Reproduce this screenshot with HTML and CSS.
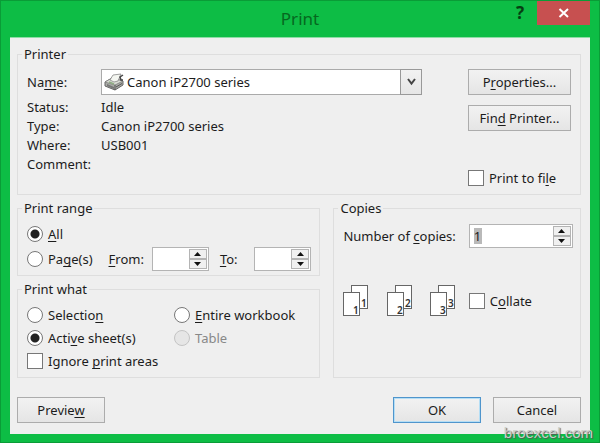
FILE: index.html
```html
<!doctype html>
<html lang="en">
    <head>
        <meta charset="utf-8">
        <title>Print</title>
        <link rel="stylesheet" href="styles.css">
    </head>
    <body>
    <div class="window">
        <header class="titlebar">
            <h1>Print</h1>
            <div class="window-buttons">
                <button type="button" class="help-button" aria-label="Help">?</button>
                <button type="button" class="close-button" aria-label="Close">
                    <svg width="12" height="10" viewBox="0 0 12 10"><path d="M1.5 1 L10 9 M10 1 L1.5 9" stroke="#fff" stroke-width="2" fill="none"/></svg>
                </button>
            </div>
        </header>

        <form class="dialog">
            <fieldset class="group">
                <legend>Printer</legend>
                <div class="printer">
                    <div class="printer-info">
                        <label class="name-label" for="printer-name">Na<u>m</u>e:</label>
                        <div class="combo">
                            <select id="printer-name">
                                <option>Canon iP2700 series</option>
                            </select>
                            <svg class="combo-icon" width="21" height="18" viewBox="0 0 21 18">
                                <path d="M1 9 L8 5 L19 8 L19 12 L11 17 L1 13 Z" fill="#a9aba6" stroke="#666" stroke-width="1"/>
                                <path d="M1 9 L8 5 L19 8 L11 12 Z" fill="#d9dcd4" stroke="#777" stroke-width=".7"/>
                                <path d="M6 7 L9 2 L17 1 L14 8 L10 9 Z" fill="#f4f6f1" stroke="#888" stroke-width=".8"/>
                                <path d="M19 2 L16 4 L17 7 L19 7" fill="none" stroke="#444" stroke-width="1.5"/>
                                <path d="M3 11 L10 14 L10 16 L3 13 Z" fill="#777"/>
                                <path d="M11 12 L11 17 M12 14 L18 10.5" stroke="#555" stroke-width="1" fill="none"/>
                                <path d="M5 9 L10 11" stroke="#8fae84" stroke-width="1.4"/>
                            </svg>
                            <span class="combo-arrow">
                                <svg width="9" height="8" viewBox="0 0 9 8"><path d="M1 1 L4.5 5.5 L8 1" fill="none" stroke="#444" stroke-width="2"/></svg>
                            </span>
                        </div>
                        <span>Status:</span><span>Idle</span>
                        <span>Type:</span><span>Canon iP2700 series</span>
                        <span>Where:</span><span>USB001</span>
                        <span>Comment:</span><span></span>
                    </div>
                    <div class="printer-actions">
                        <button type="button" class="btn">P<u>r</u>operties...</button>
                        <button type="button" class="btn">Fin<u>d</u> Printer...</button>
                        <label class="option"><input type="checkbox"> <span>Print to fi<u>l</u>e</span></label>
                    </div>
                </div>
            </fieldset>

            <div class="columns">
                <div class="left">
                    <fieldset class="group">
                        <legend>Print range</legend>
                        <div class="range">
                            <label class="option"><input type="radio" name="range" checked> <span><u>A</u>ll</span></label>
                            <div class="pages">
                                <label class="option"><input type="radio" name="range"> <span>Pa<u>g</u>e(s)</span></label>
                                <label class="from-label" for="from"><u>F</u>rom:</label>
                                <div class="spin">
                                    <input type="text" id="from">
                                    <div class="spin-buttons">
                                        <button type="button" aria-label="Increase from"><svg width="7" height="4"><path d="M0 4 L3.5 0 L7 4 Z"/></svg></button>
                                        <button type="button" aria-label="Decrease from"><svg width="7" height="4"><path d="M0 0 L3.5 4 L7 0 Z"/></svg></button>
                                    </div>
                                </div>
                                <label class="to-label" for="to"><u>T</u>o:</label>
                                <div class="spin">
                                    <input type="text" id="to">
                                    <div class="spin-buttons">
                                        <button type="button" aria-label="Increase to"><svg width="7" height="4"><path d="M0 4 L3.5 0 L7 4 Z"/></svg></button>
                                        <button type="button" aria-label="Decrease to"><svg width="7" height="4"><path d="M0 0 L3.5 4 L7 0 Z"/></svg></button>
                                    </div>
                                </div>
                            </div>
                        </div>
                    </fieldset>

                    <fieldset class="group">
                        <legend>Print what</legend>
                        <div class="what">
                            <label class="option"><input type="radio" name="what"> <span>Selectio<u>n</u></span></label>
                            <label class="option"><input type="radio" name="what"> <span><u>E</u>ntire workbook</span></label>
                            <label class="option"><input type="radio" name="what" checked> <span>Acti<u>v</u>e sheet(s)</span></label>
                            <label class="option disabled"><input type="radio" name="what" disabled> <span>Table</span></label>
                            <label class="option"><input type="checkbox"> <span>Ignore <u>p</u>rint areas</span></label>
                        </div>
                    </fieldset>
                </div>

                <fieldset class="group">
                    <legend>Copies</legend>
                    <div class="copies">
                        <label for="copies">Number of <u>c</u>opies:</label>
                        <div class="spin">
                            <div class="spin-value"><input type="text" id="copies" value="1"></div>
                            <div class="spin-buttons">
                                <button type="button" aria-label="More copies"><svg width="7" height="4"><path d="M0 4 L3.5 0 L7 4 Z"/></svg></button>
                                <button type="button" aria-label="Fewer copies"><svg width="7" height="4"><path d="M0 0 L3.5 4 L7 0 Z"/></svg></button>
                            </div>
                        </div>
                        <div class="sheets">
                            <svg width="26" height="32" viewBox="0 0 26 32">
                                <rect x="8.5" y=".5" width="16" height="23"/><text x="18" y="22">1</text>
                                <rect x=".5" y="7.5" width="16" height="23"/><text x="10" y="29">1</text>
                            </svg>
                            <svg width="26" height="32" viewBox="0 0 26 32">
                                <rect x="8.5" y=".5" width="16" height="23"/><text x="18" y="22">2</text>
                                <rect x=".5" y="7.5" width="16" height="23"/><text x="10" y="29">2</text>
                            </svg>
                            <svg width="26" height="32" viewBox="0 0 26 32">
                                <rect x="8.5" y=".5" width="16" height="23"/><text x="18" y="22">3</text>
                                <rect x=".5" y="7.5" width="16" height="23"/><text x="10" y="29">3</text>
                            </svg>
                        </div>
                        <label class="option"><input type="checkbox"> <span>C<u>o</u>llate</span></label>
                    </div>
                </fieldset>
            </div>

            <div class="footer">
                <button type="button" class="btn">Previe<u>w</u></button>
                <button type="button" class="btn default">OK</button>
                <button type="button" class="btn">Cancel</button>
            </div>
        </form>
        <div class="watermark">broexcel.com</div>
    </div>
    </body>
</html>
```
FILE: styles.css
```css
* {
    box-sizing: border-box;
}
body {
    margin: 0;
    background: #0dbd45;
    color: #1c1c1c;
    font: 13px/18px "Noto Sans", "Open Sans", sans-serif;
}
button, input, select {
    font: inherit;
    color: inherit;
    margin: 0;
}
u {
    text-underline-offset: 2px;
    text-decoration-skip-ink: none;
}

.window {
    position: relative;
    min-height: 100vh;
    padding: 0 9px 8px;
    border: 1px solid #0a9c37;
    display: flex;
    flex-direction: column;
}
.titlebar {
    position: relative;
    height: 36px;
    display: flex;
    align-items: center;
    justify-content: center;
}
.titlebar h1 {
    margin: 0;
    font-size: 17px;
    line-height: 24px;
    font-weight: 400;
    color: #06681f;
}
.window-buttons {
    position: absolute;
    top: 0;
    right: 0;
    display: flex;
}
.help-button {
    width: 34px;
    height: 24px;
    padding: 0;
    border: none;
    background: none;
    color: #063f12;
    font-size: 17px;
    font-weight: 700;
}
.close-button {
    width: 53px;
    height: 24px;
    padding: 0;
    border: none;
    background: #c75050;
    display: flex;
    align-items: center;
    justify-content: center;
}

.dialog {
    flex: 1;
    padding: 7px 9px 8px 7px;
    background: #efefef;
    border-top: 1px solid #8fdca6;
}
.group {
    min-width: 0;
    margin: 0;
    padding: 0 9px;
    border: 1px solid #dedede;
}
.group legend {
    margin-left: -5px;
    padding: 0 2px;
}

.printer {
    display: grid;
    grid-template-columns: 1fr 103px;
    column-gap: 46px;
    padding: 6px 0 7px;
}
.printer-info {
    display: grid;
    grid-template-columns: 74px 1fr;
    grid-template-rows: 29px;
    grid-auto-rows: 19px;
    align-content: start;
}
.name-label {
    line-height: 26px;
}
.combo {
    position: relative;
    height: 26px;
}
.combo select {
    appearance: none;
    width: 100%;
    height: 26px;
    padding: 0 24px 0 25px;
    border: 1px solid #aaa;
    border-radius: 0;
    background: #fff;
}
.combo-icon {
    position: absolute;
    left: 3px;
    top: 4px;
    pointer-events: none;
}
.combo-arrow {
    position: absolute;
    top: 0;
    right: 0;
    width: 22px;
    height: 26px;
    border: 1px solid #999;
    background: linear-gradient(#f2f2f2, #e6e6e6);
    display: flex;
    align-items: center;
    justify-content: center;
    pointer-events: none;
}
.printer-actions {
    display: flex;
    flex-direction: column;
    gap: 10px;
    min-height: 118px;
}
.printer-actions .option {
    margin-top: auto;
}

.btn {
    height: 26px;
    padding: 0;
    border: 1px solid #acacac;
    background: linear-gradient(#f2f2f2, #e5e5e5);
}
.btn.default {
    border-color: #4f95cc;
    box-shadow: inset 0 0 0 1px #b5def5;
}

.option {
    display: flex;
    align-items: center;
    gap: 5px;
    white-space: nowrap;
}
.option input {
    appearance: none;
    flex: none;
    width: 16px;
    height: 16px;
    border: 1px solid #777;
    background: #fff;
}
.option input[type="radio"] {
    border-radius: 50%;
}
.option input[type="radio"]:checked {
    background: radial-gradient(circle, #222 4px, #fff 5px);
}
.option.disabled {
    color: #888;
}
.option.disabled input {
    border-color: #c4c4c4;
    background: #e6e6e6;
}

.columns {
    display: grid;
    grid-template-columns: 304fr 248fr;
    gap: 13px;
    margin-top: 4px;
}
.left {
    display: flex;
    flex-direction: column;
    gap: 4px;
}
.range {
    padding: 4px 0;
}
.range .option {
    height: 25px;
}
.pages {
    display: flex;
    align-items: center;
}
.from-label {
    margin: 0 8px 0 16px;
}
.to-label {
    margin: 0 auto 0 11px;
}
.pages .spin {
    width: 57px;
}
.pages .spin:last-child {
    margin-right: -1px;
}
.what {
    display: grid;
    grid-template-columns: 147px 1fr;
    grid-auto-rows: 23px;
    padding: 5px 0;
}

.spin {
    display: flex;
    height: 24px;
    padding: 1px;
    border: 1px solid #b4b4b4;
    background: #fff;
}
.spin input {
    flex: 1;
    width: 0;
    min-width: 0;
    padding: 0;
    border: none;
    background: none;
}
.spin-value {
    flex: 1;
    display: flex;
    align-items: center;
    padding-left: 3px;
}
.spin-value input {
    flex: none;
    width: 8px;
    height: 16px;
    background: #b9b9b9;
}
.spin-buttons {
    flex: none;
    width: 18px;
    display: flex;
    flex-direction: column;
}
.spin-buttons button {
    flex: 1;
    min-height: 0;
    padding: 0;
    border: 1px solid #b4b4b4;
    background: #f0f0f0;
    display: flex;
    align-items: center;
    justify-content: center;
}
.spin-buttons path {
    fill: #111;
}

.copies {
    display: grid;
    grid-template-columns: 1fr 104px;
    grid-template-rows: 24px 32px;
    row-gap: 37px;
    column-gap: 13px;
    align-items: center;
    padding: 7px 0;
}
.copies > label {
    white-space: nowrap;
}
.copies .spin input {
    width: 8px;
}
.sheets {
    display: flex;
    justify-content: space-between;
}
.sheets rect {
    fill: #fff;
    stroke: #666;
}
.sheets text {
    font: 600 10px "Noto Sans", sans-serif;
    fill: #333;
}

.footer {
    display: flex;
    gap: 12px;
    margin-top: 19px;
}
.footer .btn {
    width: 88px;
}
.footer .btn:first-child {
    margin-right: auto;
}

.watermark {
    position: absolute;
    right: 6px;
    bottom: 0;
    color: #c9cfca;
    font: 15px/18px "Liberation Sans", Arial, sans-serif;
    text-shadow: 1px 1px 1px #555;
}
```
